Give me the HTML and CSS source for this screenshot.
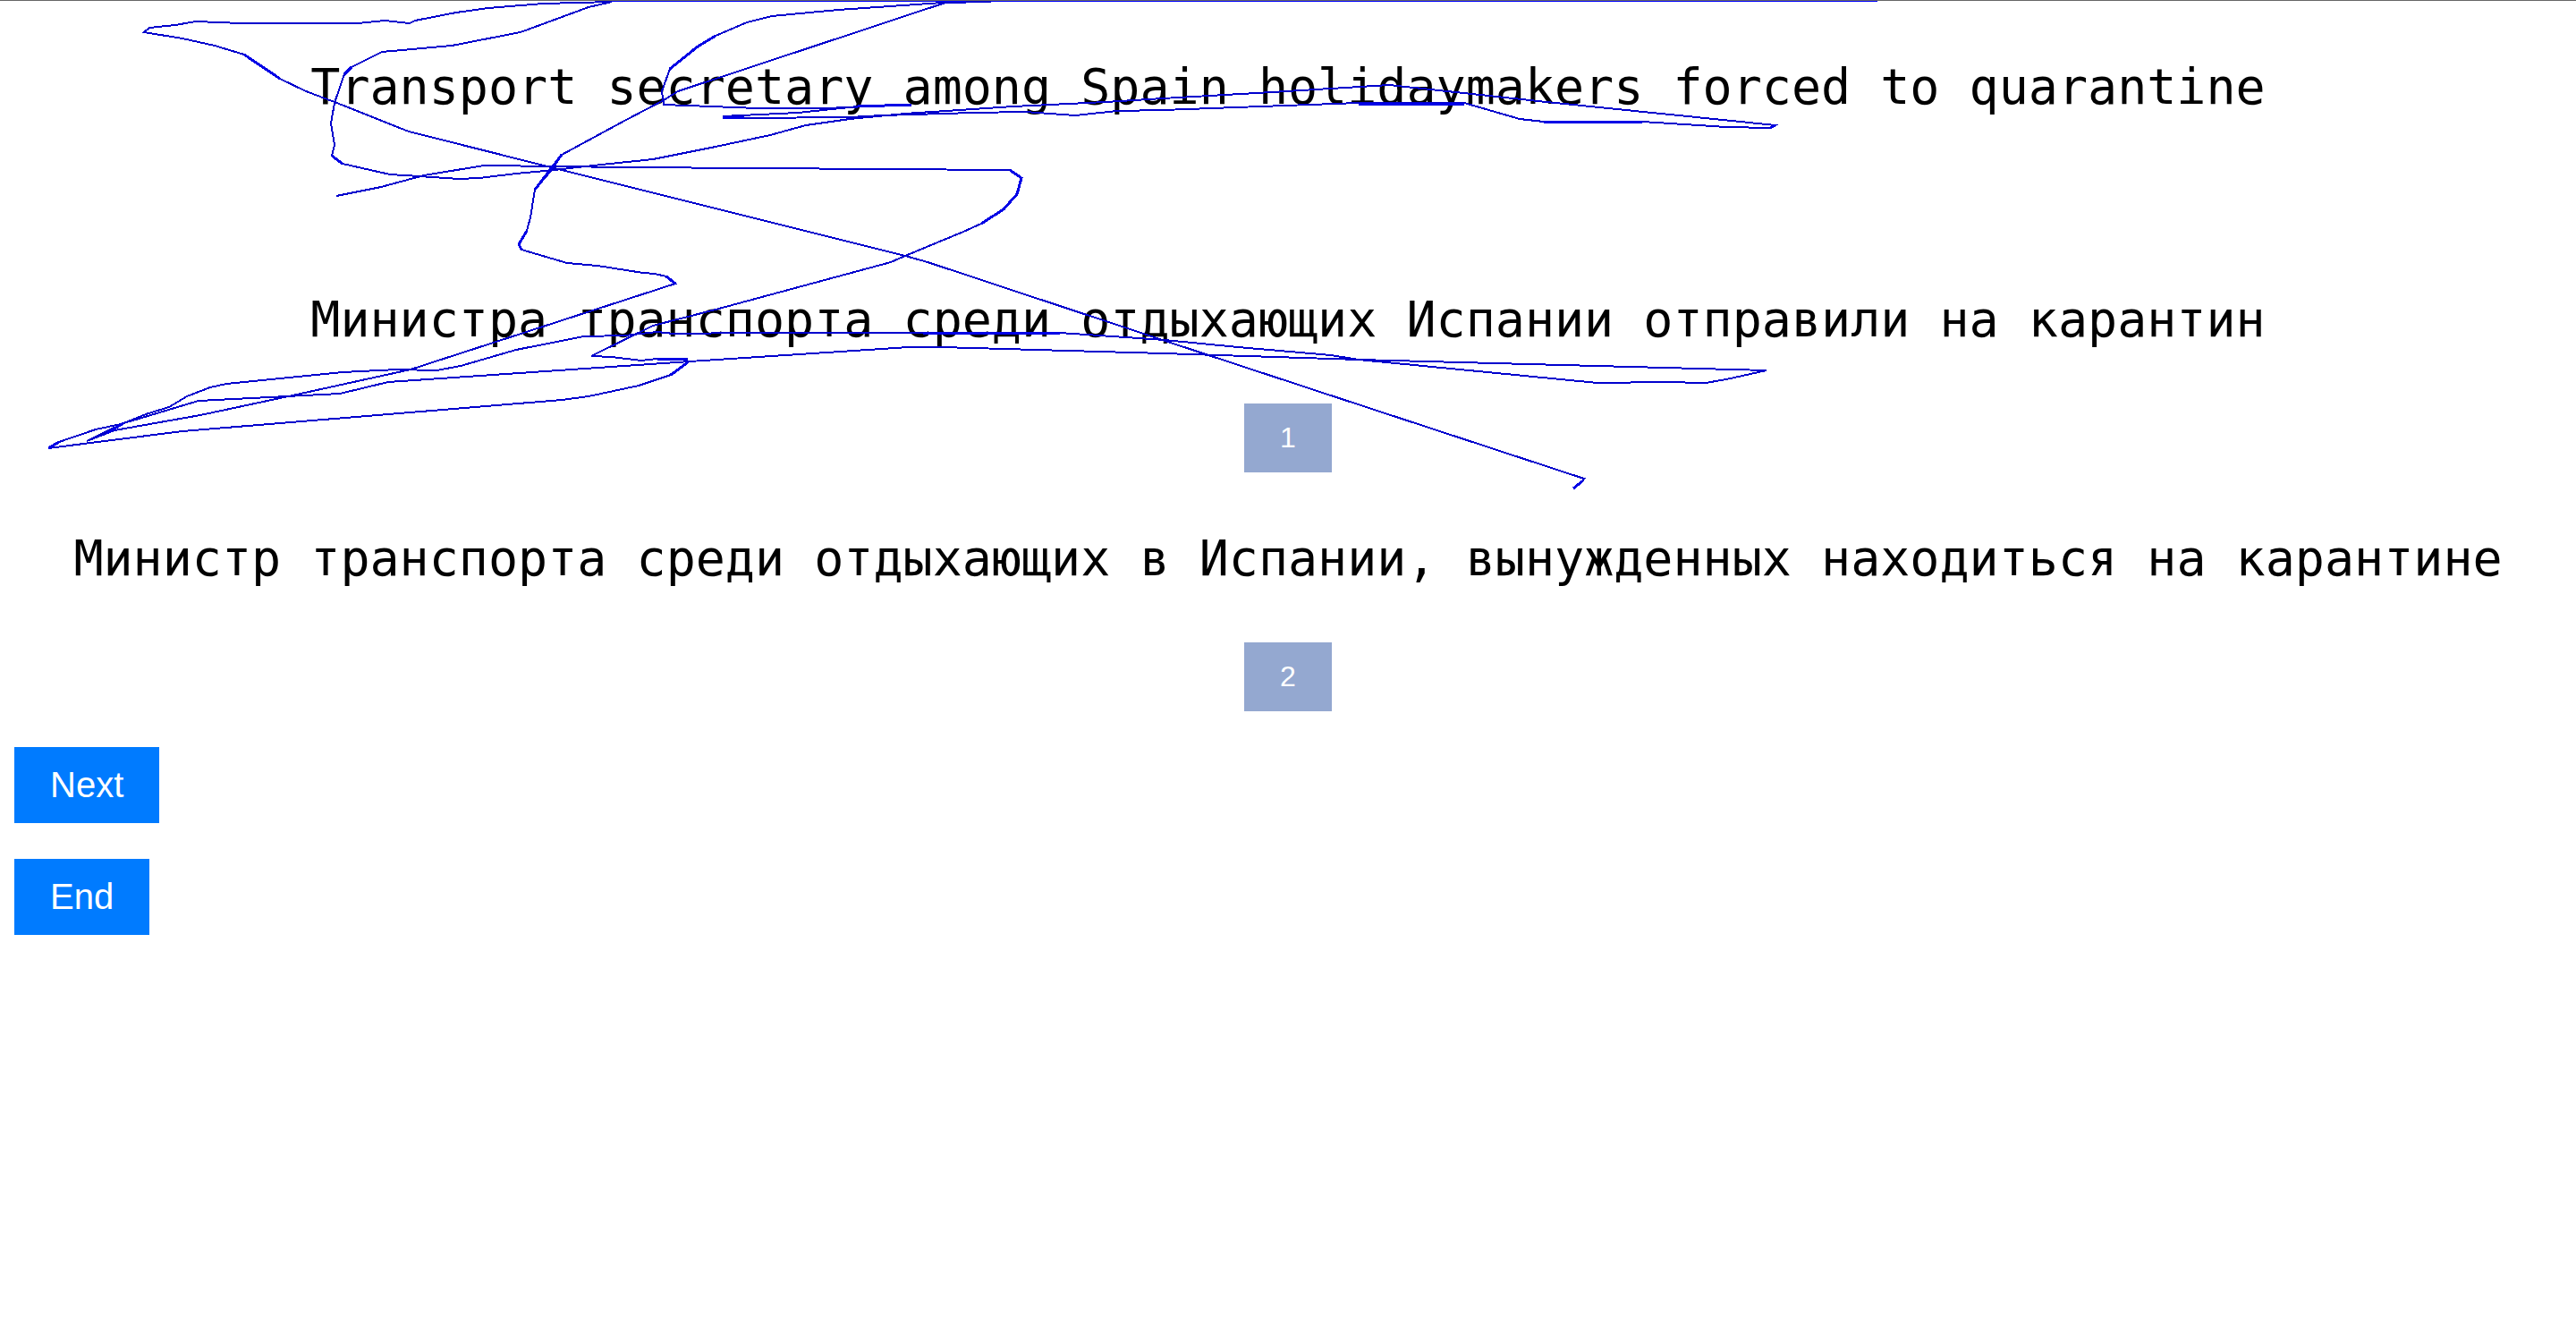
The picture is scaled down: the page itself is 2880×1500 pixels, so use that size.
FILE: index.html
```html
<!DOCTYPE html>
<html lang="ru">
<head>
<meta charset="utf-8">
<meta name="viewport" content="width=device-width, initial-scale=1">
<title>Translation choice</title>
<link rel="stylesheet" href="styles.css">
</head>
<body>
<main class="trial">
  <p class="sentence source" lang="en">Transport secretary among Spain holidaymakers forced to quarantine</p>
  <section class="option">
    <p class="sentence" id="option-1">Министра транспорта среди отдыхающих Испании отправили на карантин</p>
    <button class="choice" type="button" aria-describedby="option-1">1</button>
  </section>
  <section class="option">
    <p class="sentence" id="option-2">Министр транспорта среди отдыхающих в Испании, вынужденных находиться на карантине</p>
    <button class="choice" type="button" aria-describedby="option-2">2</button>
  </section>
  <nav class="actions">
    <button class="action" type="button">Next</button>
    <button class="action" type="button">End</button>
  </nav>
</main>
<svg class="trace" viewBox="0 0 2880 1500" aria-hidden="true">
  <path class="edge" d="M684 1H2099"/>
  <polyline points="684,2 607,4 546,9 510,14 464,23 458,26 430,23 400,26 357,26 318,26 269,26 219,24 196,28 167,31 161,36 204,43 240,51 273,61 313,88 342,102 374,114 457,147 620,188 700,208 1012,286 1037,293 1348,396 1500,446 1771,535 1769,538 1759,546"/>
  <polyline points="684,2 658,8 582,36 505,51 427,58 393,75 385,83 374,115 370,138 374,162 371,174 383,183 436,195 469,197 513,200 536,199 577,194 620,190 663,185 730,178 800,164 861,151 901,140 950,133 1012,127 1133,119 1236,114 1300,110 1422,103 1553,95 1729,114 1985,140 1979,143 1930,142 1836,136 1726,136 1699,133 1637,115 1519,115 1300,123 1249,124 1202,129 1146,125 1088,126 986,129 950,131 832,132 808,130 892,126 959,119 1019,117 923,121 847,121 742,117 740,102 749,77 780,52 800,40 835,25 863,18 937,11 1053,3 1108,2"/>
  <polyline points="1057,3 758,102 742,112 700,134 628,173 616,191 598,212 593,243 589,258 580,273 583,279 634,294 668,297 719,305 732,306 745,309 755,317 459,413 327,442 224,464 128,481 97,493 138,473 163,463 189,455 209,443 235,433 253,429 383,416 444,413 488,414 515,409 577,391 653,376 699,375 735,371 753,373 838,372 1032,372 1185,372 1302,380 1384,388 1488,397 1519,402 1786,428 1861,427 1907,428 1930,424 1975,414 1519,402 1300,395 1052,388 1016,388 771,404 434,427 380,440 222,448 135,474 107,480 66,494 54,501 204,482 628,447 658,443 714,431 750,419 769,405 768,401 735,401 717,403 684,399 661,398 730,364 800,346 996,293 1012,286 1077,259 1097,250 1122,234 1137,217 1142,199 1129,190 700,187 541,185 474,196 426,209 376,219"/>
  <path class="slow" d="M273 61L313 88M371 174L383 183M393 75L385 83M800 40L780 52L749 77M628 173L598 212M589 258L580 273L583 279M745 309L755 317M750 419L769 405M1097 250L1122 234L1137 217L1142 199L1129 190M1769 538L1759 546M66 494L54 501M138 473L120 484M1979 143L1985 140M808 131H832M959 119L1019 117M1519 116H1637M1726 136H1836M735 401H768M1032 372H1185"/>
</svg>
</body>
</html>
```
FILE: styles.css
```css
* {
  box-sizing: border-box;
}

body {
  position: relative;
  margin: 0;
  border-top: 1px solid #666;
  background: #fff;
  color: #000;
  font-family: Arial, "Liberation Sans", sans-serif;
}

.trial {
  display: flex;
  flex-direction: column;
}

.sentence {
  margin: 0;
  padding: 60px 0 58px;
  font-family: "DejaVu Sans Mono", monospace;
  font-size: 55px;
  line-height: 72px;
  text-align: center;
}

.source {
  margin-bottom: 70px;
}

.option {
  display: flex;
  flex-direction: column;
  align-items: center;
}

.choice,
.action {
  margin: 0;
  padding: 20px 40px;
  border: 0;
  color: #fff;
  font-family: inherit;
  cursor: pointer;
}

.choice {
  background: #94a8d0;
  font-size: 32px;
  line-height: 37px;
}

.action {
  background: #007bff;
  font-size: 40px;
  line-height: 45px;
}

.actions {
  display: flex;
  flex-direction: column;
  align-items: flex-start;
  gap: 40px;
  padding: 40px 16px;
}

/* Pointer track drawn over the whole page */
.trace {
  position: absolute;
  top: -1px;
  left: 0;
  width: 100%;
  height: auto;
  fill: none;
  stroke: #0000cd;
  stroke-width: 2;
  shape-rendering: crispEdges;
  pointer-events: none;
}

.edge {
  stroke: #00f;
}

/* Stretches where the pointer moved slowly */
.slow {
  stroke: #0000e6;
  stroke-width: 3;
}
```
